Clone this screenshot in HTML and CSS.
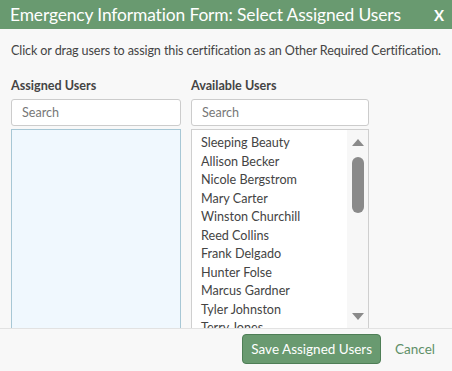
FILE: index.html
```html
<!DOCTYPE html>
<html>
<head>
<meta charset="utf-8">
<link rel="stylesheet" href="styles.css">
</head>
<body>
<div class="modal">
  <div class="header">
    <span class="title">Emergency Information Form: Select Assigned Users</span>
    <span class="close">X</span>
  </div>
  <div class="body">
    <p class="desc">Click or drag users to assign this certification as an Other Required Certification.</p>
    <div class="columns">
      <div class="col col-assigned">
        <div class="label">Assigned Users</div>
        <input class="search" type="text" placeholder="Search">
        <div class="list assigned"></div>
      </div>
      <div class="col col-available">
        <div class="label">Available Users</div>
        <input class="search" type="text" placeholder="Search">
        <div class="list available">
          <ul class="names">
            <li>Sleeping Beauty</li>
            <li>Allison Becker</li>
            <li>Nicole Bergstrom</li>
            <li>Mary Carter</li>
            <li>Winston Churchill</li>
            <li>Reed Collins</li>
            <li>Frank Delgado</li>
            <li>Hunter Folse</li>
            <li>Marcus Gardner</li>
            <li>Tyler Johnston</li>
            <li>Terry Jones</li>
            <li>Sam Keller</li>
          </ul>
          <div class="scrollbar">
            <span class="arrow up"></span>
            <span class="thumb"></span>
            <span class="spacer"></span>
            <span class="arrow down"></span>
          </div>
        </div>
      </div>
    </div>
  </div>
  <div class="footer">
    <button class="save">Save Assigned Users</button>
    <span class="cancel">Cancel</span>
  </div>
</div>
</body>
</html>
```

FILE: styles.css
```css
* { box-sizing: border-box; }
html, body { margin: 0; padding: 0; }
body {
  font-family: Lato, "Open Sans", "Liberation Sans", sans-serif;
  background: #f8f8f8;
  width: 452px;
  height: 371px;
  overflow: hidden;
  color: #444;
}
.modal { display: flex; flex-direction: column; height: 371px; }
.header {
  height: 29px;
  flex: none;
  background: #699a70;
  color: #fff;
  display: flex;
  align-items: center;
  justify-content: space-between;
  padding: 0 8px 0 10px;
}
.title { font-size: 17.4px; letter-spacing: -0.12px; }
.close { font-size: 15px; font-weight: bold; }
.body {
  height: 300px;
  flex: none;
  overflow: hidden;
  padding: 0 11px;
  border-bottom: 1px solid #e2e2e2;
}
.desc {
  margin: 14px 0 0;
  font-size: 12.6px;
  line-height: 16px;
  color: #444;
  letter-spacing: -0.12px;
  white-space: nowrap;
}
.columns {
  display: grid;
  grid-template-columns: 170px 178px;
  column-gap: 10px;
  margin-top: 19px;
}
.label {
  font-size: 12.6px;
  font-weight: bold;
  color: #444;
  line-height: 16px;
  height: 16px;
}
.search {
  display: block;
  width: 100%;
  height: 27px;
  margin-top: 5px;
  border: 1px solid #cccccc;
  border-radius: 3px;
  background: #fff;
  padding: 0 10px;
  font-family: inherit;
  font-size: 12.6px;
  color: #444;
}
.search::placeholder { color: #777; }
.list {
  margin-top: 3px;
  height: 200px;
}
.assigned {
  background: #f0f8fe;
  border: 1px solid #a7c7d5;
}
.available {
  background: #fff;
  border: 1px solid #cfcfcf;
  display: flex;
  overflow: hidden;
}
.names {
  list-style: none;
  margin: 0;
  padding: 4px 0 0 9px;
  flex: 1;
  font-size: 12.6px;
  line-height: 18.5px;
  color: #444;
}
.scrollbar {
  width: 21px;
  background: #f7f7f7;
  display: flex;
  flex-direction: column;
  align-items: center;
  padding: 9px 0 8px;
}
.arrow {
  width: 0;
  height: 0;
  border-left: 6px solid transparent;
  border-right: 6px solid transparent;
}
.arrow.up { border-bottom: 7px solid #8a8a8a; }
.arrow.down { border-top: 7px solid #8a8a8a; }
.thumb {
  width: 12px;
  height: 56px;
  margin-top: 11px;
  border-radius: 6px;
  background: #8a8a8a;
}
.spacer { flex: 1; }
.footer {
  flex: 1;
  display: flex;
  align-items: center;
  justify-content: flex-end;
  padding: 0 17px 2px 0;
}
.save {
  height: 30px;
  padding: 0 8px;
  background: #699a70;
  border: 1px solid #4e7e56;
  border-radius: 4px;
  color: #fff;
  font-family: inherit;
  font-size: 13.5px;
  white-space: nowrap;
}
.cancel {
  margin-left: 14px;
  font-size: 13.5px;
  color: #5f9068;
}
```
